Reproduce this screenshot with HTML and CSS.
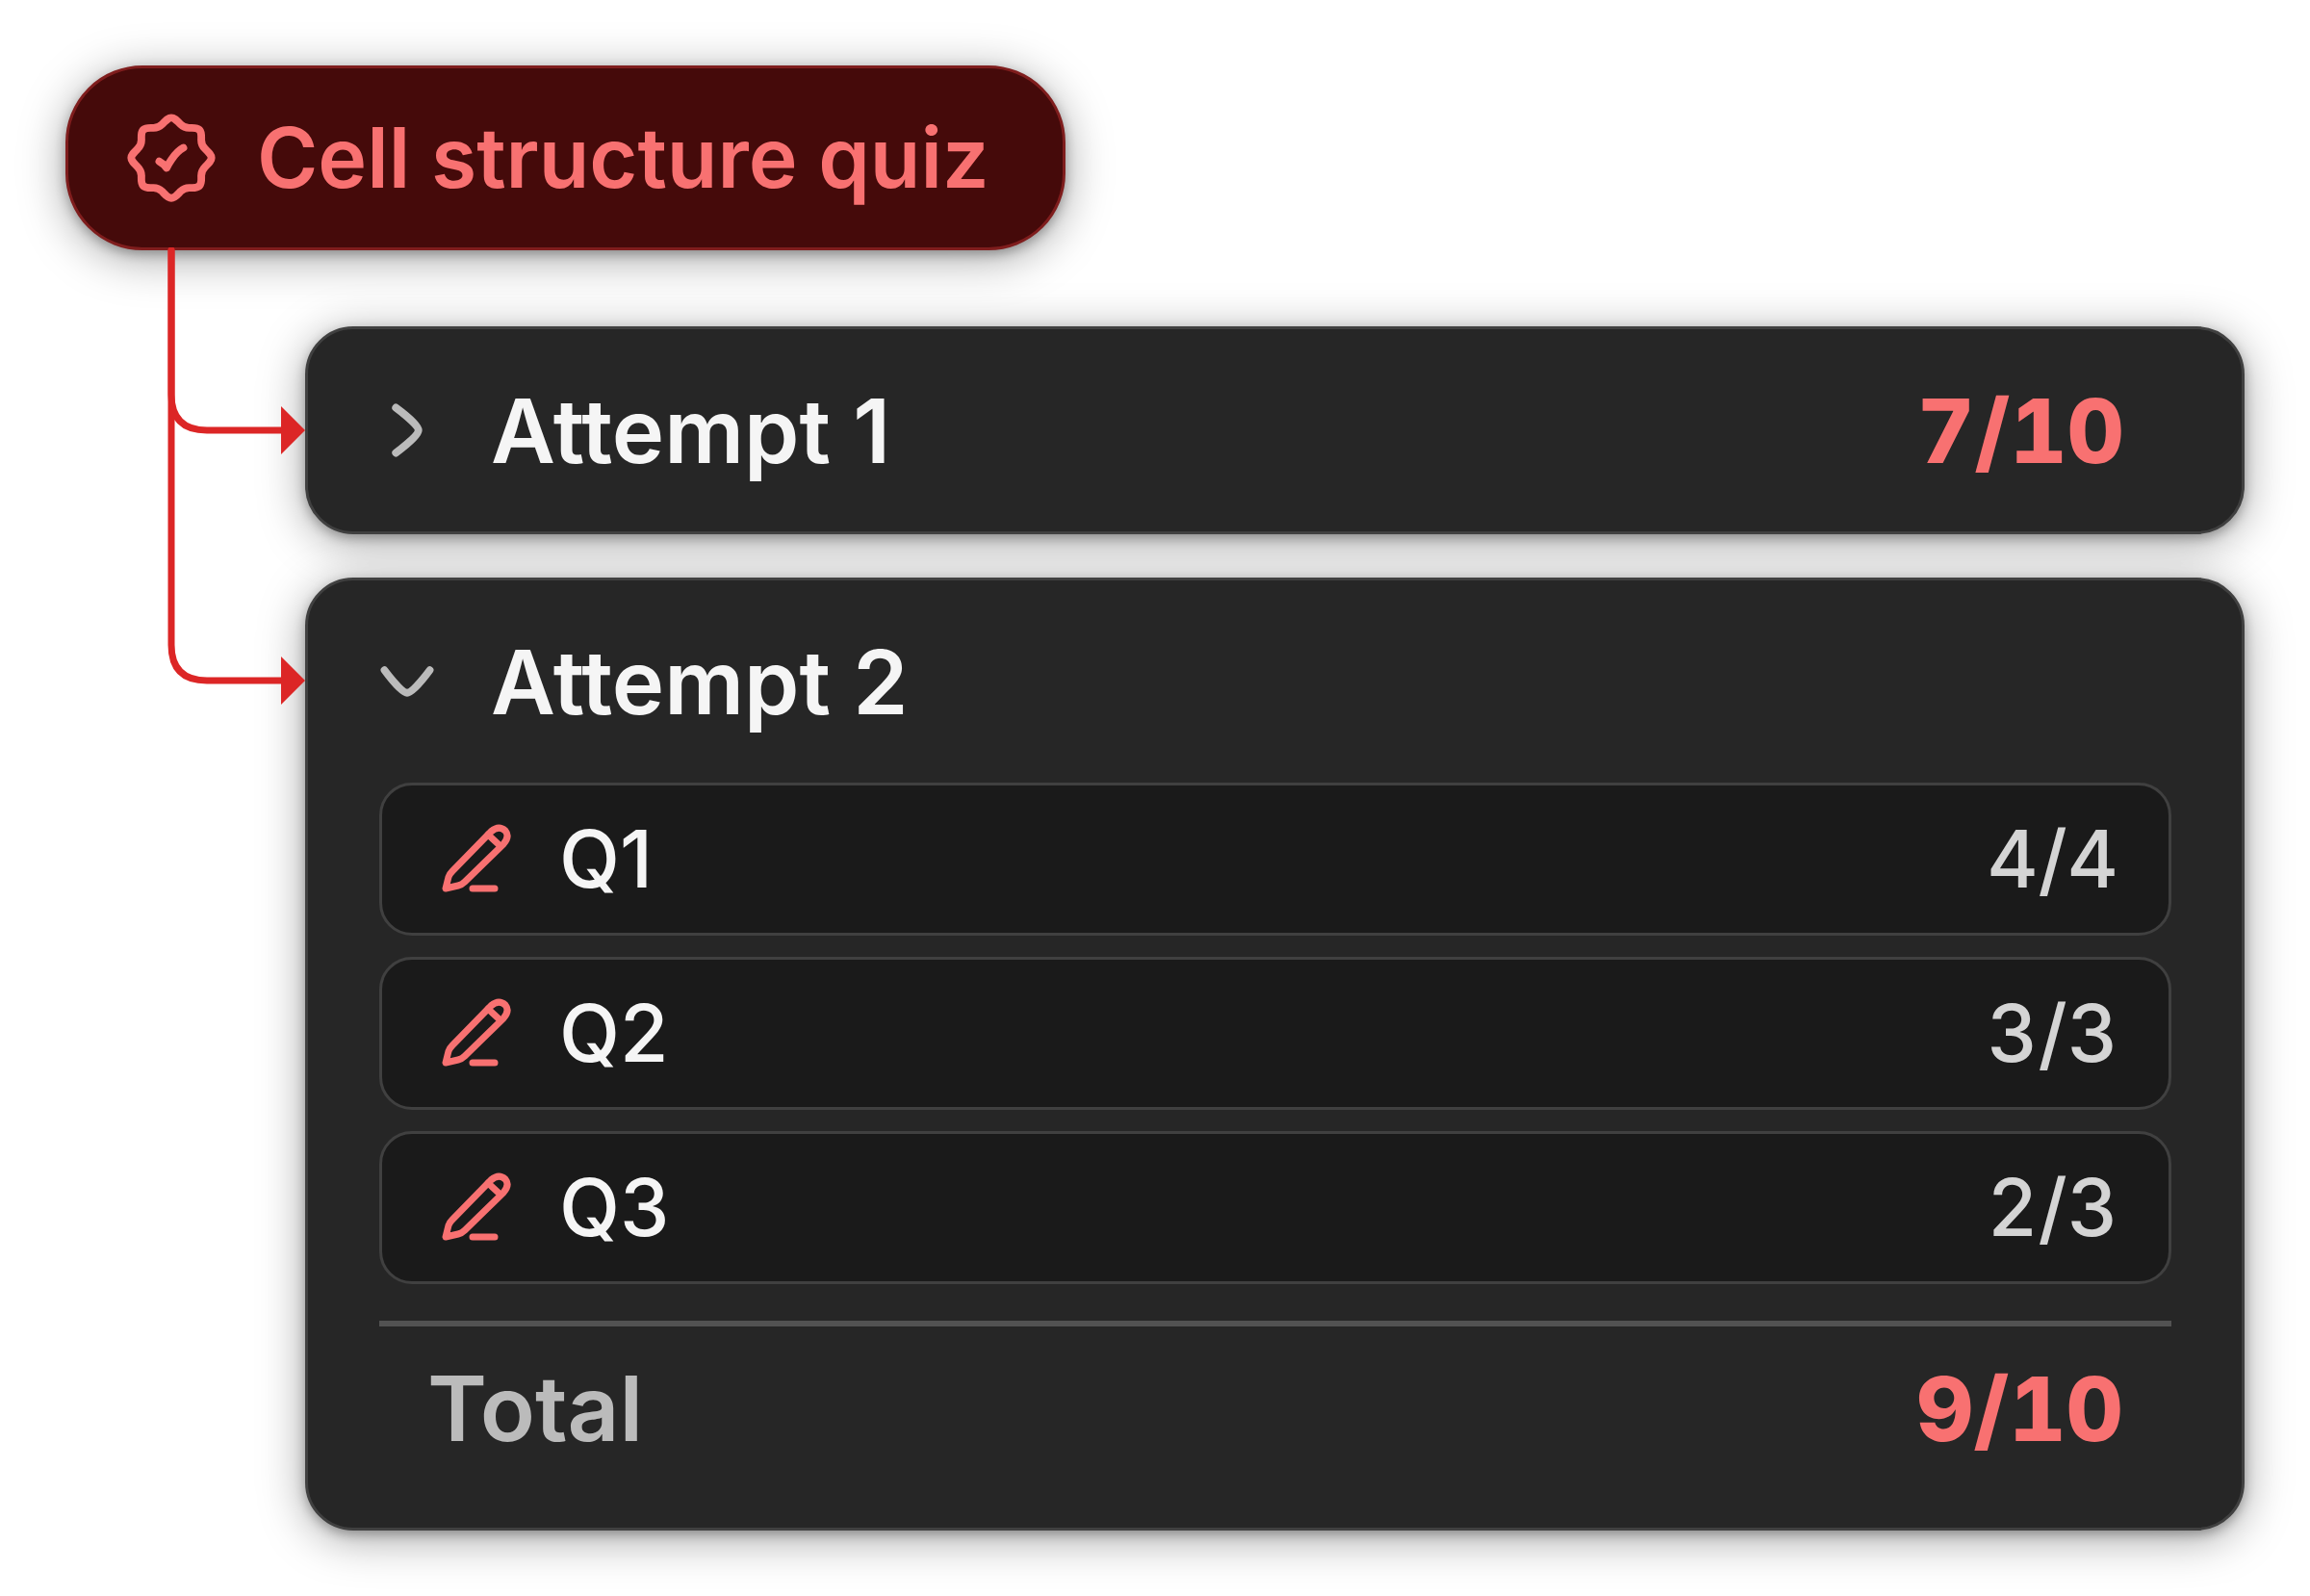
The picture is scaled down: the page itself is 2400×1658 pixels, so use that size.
FILE: index.html
```html
<!DOCTYPE HTML>
<html lang="en">
	<head>
		<meta charset="utf-8">
		<title>Cell structure quiz</title>
		<link rel="stylesheet" href="styles.css">
	</head>

	<body>
		<!-- shared icon shapes -->
		<svg class="sprite" aria-hidden="true">
			<symbol id="badge" viewBox="0 0 24 24">
				<path d="M18.99 19C18.3678 19.6175 17.2393 19.4637 16.4479 19.4637C15.4765 19.4637 15.0087 19.6537 14.3154 20.347C13.7251 20.9374 12.9337 22 12 22C11.0663 22 10.2749 20.9374 9.68457 20.347C8.99128 19.6537 8.52349 19.4637 7.55206 19.4637C6.76068 19.4637 5.63218 19.6175 5.00949 19C4.38181 18.3776 4.53628 17.2444 4.53628 16.4479C4.53628 15.4414 4.31616 14.9786 3.59938 14.2618C2.53314 13.1956 2 12.6624 2 12C2 11.3375 2.53312 10.8044 3.59935 9.73817C4.2392 9.09832 4.53628 8.46428 4.53628 7.55206C4.53628 6.76065 4.38249 5.63214 5 5.00944C5.62243 4.38178 6.7556 4.53626 7.55208 4.53626C8.46427 4.53626 9.09832 4.2392 9.73815 3.59937C10.8044 2.53312 11.3375 2 12 2C12.6625 2 13.1956 2.53312 14.2618 3.59937C14.9015 4.23907 15.5355 4.53626 16.4479 4.53626C17.2393 4.53626 18.3679 4.38247 18.9906 5C19.6182 5.62243 19.4637 6.75559 19.4637 7.55206C19.4637 8.55858 19.6839 9.02137 20.4006 9.73817C21.4669 10.8044 22 11.3375 22 12C22 12.6624 21.4669 13.1956 20.4006 14.2618C19.6838 14.9786 19.4637 15.4414 19.4637 16.4479C19.4637 17.2444 19.6182 18.3776 18.99 19Z"/>
				<path d="M9 12.8929C9 12.8929 10.2 13.5447 10.8 14.5C10.8 14.5 12.6 10.75 15 9.5"/>
			</symbol>
			<symbol id="chevron-right" viewBox="0 0 24 24">
				<path d="M9 6C9 6 15 10.4189 15 12C15 13.5812 9 18 9 18"/>
			</symbol>
			<symbol id="chevron-down" viewBox="0 0 24 24">
				<path d="M18 9C18 9 13.5811 15 12 15C10.4188 15 6 9 6 9"/>
			</symbol>
			<symbol id="pencil" viewBox="0 0 84 84">
				<path d="M10 72L13 60Q14 57 17 54L57 13Q65 6 72 12Q77 18 70 26L30 65Q27 68 23 69Z"/>
				<path d="M54 16L67 28M38 72H61"/>
			</symbol>
		</svg>

		<main class="quiz">
			<h1 class="chip">
				<svg class="icon badge" aria-hidden="true"><use href="#badge"/></svg>
				Cell structure quiz
			</h1>

			<div class="attempts">
				<!-- lines from the quiz to each attempt -->
				<svg class="connector" viewBox="0 0 150 480" aria-hidden="true">
					<path class="line" d="M8 3V153Q8 190 45 190H124"/>
					<path class="line" d="M8 3V413Q8 450 45 450H124"/>
					<path class="arrow" d="M122 165L147 190L122 215ZM122 425L147 450L122 475Z"/>
				</svg>

				<section class="card">
					<button class="header" type="button" aria-expanded="false">
						<svg class="icon chevron" aria-hidden="true"><use href="#chevron-right"/></svg>
						<span class="title">Attempt 1</span>
						<span class="score">7/10</span>
					</button>
				</section>

				<section class="card">
					<button class="header" type="button" aria-expanded="true">
						<svg class="icon chevron" aria-hidden="true"><use href="#chevron-down"/></svg>
						<span class="title">Attempt 2</span>
					</button>
					<div class="details">
						<ul class="questions">
							<li class="question">
								<svg class="icon pencil" aria-hidden="true"><use href="#pencil"/></svg>
								<span class="name">Q1</span>
								<span class="points">4/4</span>
							</li>
							<li class="question">
								<svg class="icon pencil" aria-hidden="true"><use href="#pencil"/></svg>
								<span class="name">Q2</span>
								<span class="points">3/3</span>
							</li>
							<li class="question">
								<svg class="icon pencil" aria-hidden="true"><use href="#pencil"/></svg>
								<span class="name">Q3</span>
								<span class="points">2/3</span>
							</li>
						</ul>
						<div class="total">
							<span class="label">Total</span>
							<span class="score">9/10</span>
						</div>
					</div>
				</section>
			</div>
		</main>
	</body>
</html>
```
FILE: styles.css
```css
*
{
	box-sizing:border-box;
}

body
{
	margin:0;
	background-color:white;
	font-family:Inter, sans-serif;
	font-size:92px;
	font-weight:600;
}

.sprite
{
	display:none;
}

.icon
{
	flex:none;
	fill:none;
	stroke:currentColor;
	stroke-linecap:round;
	stroke-linejoin:round;
}

.quiz
{
	padding:68px;
}

.chip
{
	display:flex;
	align-items:center;
	gap:39px;
	width:fit-content;
	height:192px;
	margin:0;
	padding:0 76px 0 57px;
	border:3px solid #7f1d1d;
	border-radius:80px;
	background-color:#450a0a;
	color:#f87171;
	font-size:86px;
	font-weight:600;
	box-shadow:0 4px 12px rgba(0,0,0,0.28), 0 8px 48px rgba(0,0,0,0.36);
}

.badge
{
	width:100px;
	height:100px;
	stroke-width:1.9;
}

.attempts
{
	position:relative;
	display:flex;
	flex-direction:column;
	gap:45px;
	margin-top:79px;
	padding-left:249px;
}

/* reaches up to the bottom edge of the chip */
.connector
{
	position:absolute;
	top:-82px;
	left:102px;
	width:150px;
	height:480px;
}

.line
{
	fill:none;
	stroke:#dc2626;
	stroke-width:7;
	stroke-linecap:round;
}

.arrow
{
	fill:#dc2626;
}

.card
{
	border:3px solid #404040;
	border-radius:50px;
	background-color:#262626;
	box-shadow:0 4px 12px rgba(0,0,0,0.28), 0 8px 48px rgba(0,0,0,0.36);
}

.header
{
	display:flex;
	align-items:center;
	gap:40px;
	width:100%;
	height:210px;
	padding:0 122px 0 56px;
	border:0;
	background:none;
	color:#f5f5f5;
	font:inherit;
	text-align:left;
	cursor:pointer;
}

.chevron
{
	width:94px;
	height:94px;
	color:#bbbbbb;
	stroke-width:2;
}

.title,
.name,
.label
{
	flex:1;
}

.score
{
	color:#f87171;
	font-weight:800;
	font-variant-numeric:tabular-nums;
}

.details
{
	padding:0 73px 39px 74px;
}

.questions
{
	display:flex;
	flex-direction:column;
	gap:22px;
	margin:0;
	padding:0;
	list-style:none;
}

.question
{
	display:flex;
	align-items:center;
	gap:44px;
	height:159px;
	padding:0 52px 0 56px;
	border:3px solid #404040;
	border-radius:34px;
	background-color:#1a1a1a;
	color:#f5f5f5;
	font-size:82px;
	font-weight:500;
}

.pencil
{
	width:84px;
	height:84px;
	color:#f87171;
	stroke-width:7;
}

.points
{
	color:#d4d4d4;
	font-variant-numeric:tabular-nums;
}

.total
{
	display:flex;
	align-items:center;
	height:176px;
	margin-top:38px;
	padding:0 50px;
	border-top:6px solid #525252;
}

.label
{
	color:#bbbbbb;
	font-size:94px;
}
```
